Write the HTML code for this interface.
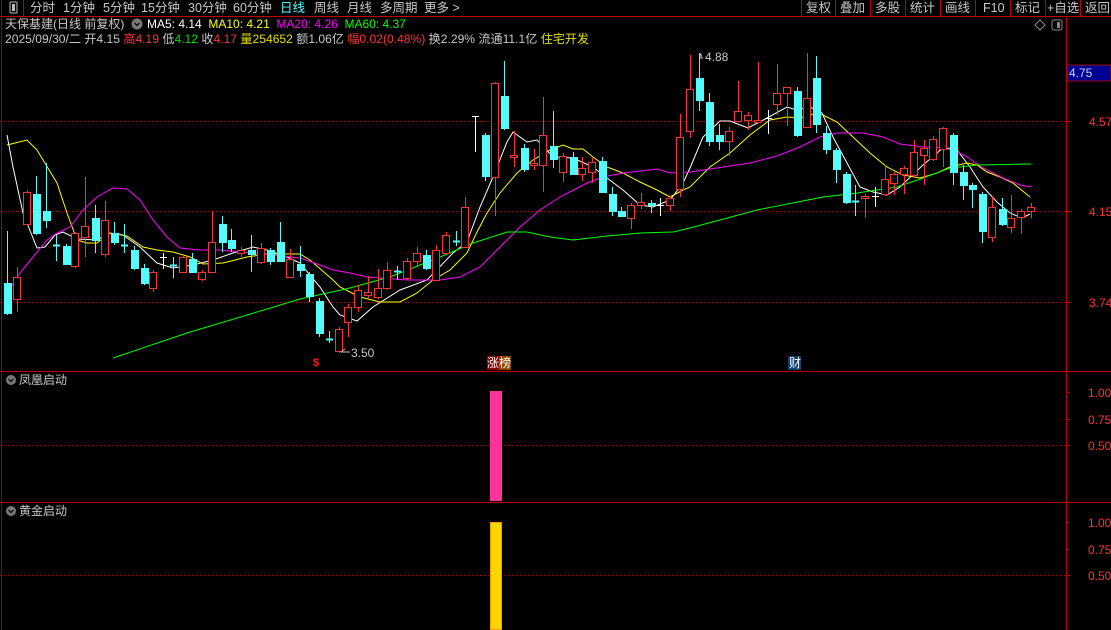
<!DOCTYPE html>
<html><head><meta charset="utf-8"><style>
html,body{margin:0;padding:0;background:#000;width:1111px;height:630px;overflow:hidden;font-family:"Liberation Sans","Noto Sans CJK SC",sans-serif;}
.t{position:absolute;white-space:nowrap;font-size:12px;line-height:14px;}
.b{position:absolute;white-space:nowrap;font-size:12.5px;line-height:14px;top:1px;color:#c8c8c8;}
</style></head><body>
<svg id="s" width="1111" height="630" style="position:absolute;left:0;top:0" xmlns="http://www.w3.org/2000/svg">
<rect width="1111" height="630" fill="#000"/>
<line x1="0" y1="16.5" x2="1111" y2="16.5" stroke="#c00000"/>
<line x1="1.5" y1="0" x2="1.5" y2="630" stroke="#a00000"/>
<line x1="23.5" y1="0" x2="23.5" y2="16" stroke="#c00000"/>
<rect x="10" y="2" width="7" height="11" rx="1" fill="none" stroke="#bbb"/>
<rect x="12" y="4" width="3" height="7" fill="#bbb"/>
<g stroke="#c00000">
<line x1="801.5" y1="0" x2="801.5" y2="16"/><line x1="835.5" y1="0" x2="835.5" y2="16"/><line x1="870.5" y1="0" x2="870.5" y2="16"/><line x1="905.5" y1="0" x2="905.5" y2="16"/><line x1="940.5" y1="0" x2="940.5" y2="16"/><line x1="975.5" y1="0" x2="975.5" y2="16"/><line x1="1010.5" y1="0" x2="1010.5" y2="16"/><line x1="1045.5" y1="0" x2="1045.5" y2="16"/><line x1="1080.5" y1="0" x2="1080.5" y2="16"/>
</g>
<line x1="1066.5" y1="16" x2="1066.5" y2="630" stroke="#c00000"/>
<line x1="0" y1="371.5" x2="1111" y2="371.5" stroke="#c00000"/>
<line x1="0" y1="502.5" x2="1111" y2="502.5" stroke="#c00000"/>
<g stroke="#c00000" stroke-dasharray="1,3">
<line x1="0" y1="121.5" x2="1066" y2="121.5"/><line x1="0" y1="211.5" x2="1066" y2="211.5"/><line x1="0" y1="302.5" x2="1066" y2="302.5"/>
<line x1="0" y1="445.5" x2="1066" y2="445.5"/><line x1="0" y1="575.5" x2="1066" y2="575.5"/>
</g>
<g stroke="#c00000">
<line x1="1066" y1="121.5" x2="1072" y2="121.5"/><line x1="1066" y1="211.5" x2="1072" y2="211.5"/><line x1="1066" y1="302.5" x2="1072" y2="302.5"/>
<line x1="1066" y1="392.5" x2="1070" y2="392.5"/><line x1="1066" y1="419.5" x2="1070" y2="419.5"/><line x1="1066" y1="445.5" x2="1070" y2="445.5"/>
<line x1="1066" y1="522.5" x2="1070" y2="522.5"/><line x1="1066" y1="549.5" x2="1070" y2="549.5"/><line x1="1066" y1="575.5" x2="1070" y2="575.5"/>
</g>
<rect x="1067" y="65" width="44" height="16" fill="#000090" stroke="#c00000" stroke-width="0.8"/>
<path d="M1040 20 l5 5 l-5 5 l-5 -5z" fill="none" stroke="#888"/>
<rect x="1052" y="20" width="10" height="10" rx="2" fill="none" stroke="#888"/><rect x="1057" y="22" width="3" height="6" fill="#888"/>
<g id="ma" fill="none" stroke-width="1"></g>
<g id="c"></g>
<rect x="490" y="391" width="12" height="110" fill="#ff3399"/>
<rect x="490" y="522" width="12" height="108" fill="#ffd700"/>
<rect x="490.5" y="522.5" width="11" height="107" fill="none" stroke="#ff9900"/>
<circle cx="11" cy="380" r="5" fill="#777"/><path d="M8.5 379 l2.5 2.5 l2.5 -2.5" stroke="#000" fill="none" stroke-width="1.2"/>
<circle cx="11" cy="511" r="5" fill="#777"/><path d="M8.5 510 l2.5 2.5 l2.5 -2.5" stroke="#000" fill="none" stroke-width="1.2"/>
<circle cx="137" cy="24" r="5.5" fill="#777"/><path d="M134.5 23 l2.5 2.5 l2.5 -2.5" stroke="#000" fill="none" stroke-width="1.2"/>
<path d="M345 349 l-4 3 M341 352 h9" stroke="#bbb" fill="none"/>
<path d="M702 56 l-3 -2 M699 54 h2 v4 M699 58 h4" stroke="#bbb" fill="none"/>
<rect x="487" y="356" width="12" height="14" fill="#8b0000"/><rect x="499" y="356" width="12" height="14" fill="#8b4500"/>
<rect x="788" y="356" width="13" height="14" fill="#104070"/>
</svg>
<div class="b" style="left:30px">分时</div>
<div class="b" style="left:63px">1分钟</div>
<div class="b" style="left:103px">5分钟</div>
<div class="b" style="left:141px">15分钟</div>
<div class="b" style="left:188px">30分钟</div>
<div class="b" style="left:233px">60分钟</div>
<div class="b" style="left:280px;color:#55ffff">日线</div>
<div class="b" style="left:314px">周线</div>
<div class="b" style="left:347px">月线</div>
<div class="b" style="left:380px">多周期</div>
<div class="b" style="left:424px">更多 &gt;</div>
<div class="b" style="left:806px">复权</div>
<div class="b" style="left:840px">叠加</div>
<div class="b" style="left:875px">多股</div>
<div class="b" style="left:910px">统计</div>
<div class="b" style="left:945px">画线</div>
<div class="b" style="left:983px">F10</div>
<div class="b" style="left:1015px">标记</div>
<div class="b" style="left:1047px">+自选</div>
<div class="b" style="left:1085px">返回</div>
<div class="t" style="left:5px;top:17px;color:#c8c8c8">天保基建(日线 前复权)</div>
<div class="t" style="left:147px;top:17px;"><span style="color:#fff">MA5: 4.14</span>&nbsp; <span style="color:#ffff00">MA10: 4.21</span>&nbsp; <span style="color:#ff00ff">MA20: 4.26</span>&nbsp; <span style="color:#00ff00">MA60: 4.37</span></div>
<div class="t" style="left:5px;top:32px;color:#c8c8c8;font-size:12.1px">2025/09/30/二 开4.15 <span style="color:#ff3232">高4.19</span> <span style="color:#c8c8c8">低</span><span style="color:#00e000">4.12</span> <span style="color:#c8c8c8">收</span><span style="color:#ff3232">4.17</span> <span style="color:#e0e000">量254652</span> 额1.06亿 <span style="color:#ff3232">幅0.02(0.48%)</span> 换2.29% 流通11.1亿 <span style="color:#e0e000">住宅开发</span></div>
<div class="t" style="left:1069px;top:66px;color:#d0d0ff">4.75</div>
<div class="t" style="left:1089px;top:115px;color:#ff3232">4.57</div>
<div class="t" style="left:1089px;top:205px;color:#ff3232">4.15</div>
<div class="t" style="left:1089px;top:296px;color:#ff3232">3.74</div>
<div class="t" style="left:1088px;top:386px;color:#ff3232">1.00</div>
<div class="t" style="left:1088px;top:413px;color:#ff3232">0.75</div>
<div class="t" style="left:1088px;top:439px;color:#ff3232">0.50</div>
<div class="t" style="left:1088px;top:516px;color:#ff3232">1.00</div>
<div class="t" style="left:1088px;top:543px;color:#ff3232">0.75</div>
<div class="t" style="left:1088px;top:569px;color:#ff3232">0.50</div>
<div class="t" style="left:351px;top:346px;color:#c8c8c8">3.50</div>
<div class="t" style="left:705px;top:50px;color:#c8c8c8">4.88</div>
<div class="t" style="left:313px;top:356px;color:#ff2020;font-weight:bold;font-size:11px">$</div>
<div class="t" style="left:487px;top:356px;color:#fff;font-size:12px">涨榜</div>
<div class="t" style="left:789px;top:356px;color:#fff;font-size:12px">财</div>
<div class="t" style="left:19px;top:373px;color:#c8c8c8">凤凰启动</div>
<div class="t" style="left:19px;top:504px;color:#c8c8c8">黄金启动</div>
<script>
var C=[
[0,'c',283,313,231,315],[1,'r',277,299,267,312],[2,'r',192,224,190,226],[3,'c',194,233,176,235],[4,'c',211,220,163,228],
[5,'c',245,246,235,261],[6,'c',246,264,244,265],[7,'r',233,266,232,268],[8,'r',226,237,177,257],[9,'c',218,240,205,253],
[10,'r',220,254,201,257],[11,'c',233,242,222,245],[12,'c',245,246,224,253],[13,'c',250,268,246,270],[14,'c',268,283,264,285],
[15,'r',272,288,270,292],[16,'w',257,257,253,269],[17,'c',265,266,257,278],[18,'r',257,272,254,273],[19,'c',259,272,253,273],
[20,'r',272,279,270,281],[21,'r',242,272,211,273],[22,'c',224,242,216,252],[23,'c',240,248,229,252],[24,'r',250,253,247,257],
[25,'c',250,254,235,272],[26,'r',248,262,243,264],[27,'c',250,261,248,265],[28,'c',242,261,222,262],[29,'r',259,277,249,278],
[30,'c',264,270,246,277],[31,'c',274,296,272,302],[32,'c',301,333,298,337],[33,'c',339,340,331,343],[34,'r',329,351,327,353],
[35,'r',307,322,304,337],[36,'r',290,307,285,312],[37,'r',292,295,276,298],[38,'r',288,297,269,299],[39,'r',270,288,262,290],
[40,'c',271,272,266,280],[41,'r',261,278,258,280],[42,'r',253,261,247,267],[43,'c',255,268,250,270],[44,'r',250,280,245,281],
[45,'r',235,253,232,254],[46,'c',241,242,231,246],[47,'r',207,247,197,248],[48,'w',116,116,116,152],[49,'c',135,176,133,181],
[50,'r',83,177,82,216],[51,'c',96,128,61,130],[52,'r',155,157,131,167],[53,'c',148,169,144,172],[54,'r',163,165,149,170],
[55,'r',135,165,97,192],[56,'c',146,159,111,168],[57,'r',156,172,153,182],[58,'c',157,174,152,175],[59,'r',168,174,157,181],
[60,'r',162,172,158,183],[61,'c',161,192,157,193],[62,'c',194,211,187,216],[63,'c',211,216,207,217],[64,'r',205,218,203,229],
[65,'r',202,205,193,209],[66,'c',203,205,200,213],[67,'w',205,205,198,216],[68,'r',198,205,196,211],[69,'r',137,189,114,197],
[70,'r',89,131,55,138],[71,'c',78,100,53,111],[72,'c',102,141,93,146],[73,'c',135,141,124,150],[74,'r',131,141,127,156],
[75,'r',111,121,81,121],[76,'r',115,120,112,130],[77,'r',120,122,62,122],[78,'w',118,118,110,134],[79,'r',93,104,64,115],
[80,'r',87,93,87,126],[81,'c',91,135,87,137],[82,'r',98,127,53,127],[83,'c',78,124,56,133],[84,'c',133,149,126,154],
[85,'c',150,169,148,183],[86,'c',174,202,172,204],[87,'c',201,202,185,216],[88,'r',196,198,194,218],[89,'w',196,196,187,207],
[90,'r',179,194,165,196],[91,'r',174,183,172,195],[92,'r',168,174,166,194],[93,'r',152,175,140,177],[94,'r',148,155,140,185],
[95,'r',139,159,136,161],[96,'r',128,149,127,167],[97,'c',135,172,133,185],[98,'c',172,185,165,200],[99,'c',185,189,183,208],
[100,'c',194,231,192,243],[101,'r',207,237,197,242],[102,'c',209,224,198,226],[103,'r',218,227,195,233],[104,'r',211,217,209,234],
[105,'r',207,211,203,218]];
var g=document.getElementById('c'),h='';
C.forEach(function(d){var x=Math.round(7+d[0]*9.752),col=d[1]=='r'?'#ff3232':d[1]=='c'?'#54fcfc':'#ffffff';
var t=Math.min(d[2],d[3]),b=Math.max(d[2],d[3]);
h+='<line x1="'+(x+.5)+'" y1="'+d[4]+'" x2="'+(x+.5)+'" y2="'+t+'" stroke="'+col+'"/>';
h+='<line x1="'+(x+.5)+'" y1="'+b+'" x2="'+(x+.5)+'" y2="'+d[5]+'" stroke="'+col+'"/>';
if(b-t<2){h+='<line x1="'+(x-3)+'" y1="'+(t+.5)+'" x2="'+(x+4)+'" y2="'+(t+.5)+'" stroke="'+col+'" stroke-width="'+(d[1]=='w'?1:2)+'"/>';}
else if(d[1]=='r'){h+='<rect x="'+(x-3.5)+'" y="'+(t+.5)+'" width="7" height="'+(b-t)+'" fill="#000" stroke="'+col+'"/>';}
else{h+='<rect x="'+(x-3)+'" y="'+t+'" width="8" height="'+(b-t+1)+'" fill="'+col+'"/>';}
});
g.innerHTML=h;
var M={
'#ffffff':[[7,135],[13,167],[23,213],[37,248],[45,247],[55,235],[63,232],[77,239],[97,240],[110,233],[123,235],[140,247],[157,263],[173,268],[193,265],[213,260],[233,253],[253,247],[267,250],[287,257],[300,263],[320,287],[333,307],[340,315],[357,321],[373,307],[400,290],[427,280],[453,253],[467,242],[480,207],[493,177],[507,142],[513,132],[527,142],[537,140],[553,157],[573,158],[593,167],[607,178],[623,190],[640,205],[653,207],[670,200],[683,183],[690,168],[703,137],[720,121],[730,121],[748,128],[767,118],[787,107],[797,110],[810,107],[822,113],[833,137],[847,163],[860,187],[873,192],[887,195],[900,187],[923,165],[943,148],[957,150],[970,167],[983,187],[997,202],[1010,213],[1022,218],[1030,214]],
'#ffff00':[[7,145],[27,140],[37,150],[57,183],[67,213],[77,240],[87,243],[97,243],[110,233],[127,236],[143,247],[157,250],[173,252],[190,257],[203,264],[223,263],[247,257],[267,254],[300,254],[310,260],[333,280],[340,287],[360,297],[380,302],[400,302],[417,293],[433,280],[450,270],[467,253],[477,232],[487,213],[500,193],[517,173],[533,160],[550,150],[563,145],[573,149],[583,149],[593,157],[607,167],[623,173],[640,182],[657,190],[670,197],[683,190],[690,187],[710,167],[730,153],[750,135],[770,120],[787,117],[800,118],[813,114],[823,115],[837,122],[853,137],[870,153],[887,167],[903,175],[920,178],[937,173],[950,167],[967,163],[977,165],[987,172],[1000,177],[1013,183],[1030,197]],
'#ff00ff':[[7,293],[20,273],[33,257],[47,240],[57,233],[70,227],[83,210],[97,197],[113,188],[127,189],[140,200],[153,220],[167,237],[180,248],[200,250],[220,250],[253,253],[300,258],[320,265],[333,270],[350,273],[367,277],[407,280],[440,280],[460,277],[480,267],[500,247],[520,227],[540,210],[560,197],[587,183],[603,177],[623,173],[657,169],[670,173],[690,172],[723,167],[750,163],[777,156],[800,147],[820,137],[837,133],[863,133],[883,137],[900,144],[923,147],[950,148],[967,157],[983,168],[1003,178],[1020,185],[1031,187]],
'#00ff00':[[113,358],[187,333],[267,309],[300,299],[350,288],[390,277],[440,257],[473,243],[507,232],[527,232],[550,237],[573,240],[607,236],[640,233],[673,232],[690,228],[757,210],[823,197],[857,193],[897,187],[923,178],[950,168],[977,165],[1031,164]]};
var mh='';for(var k in M){mh+='<polyline stroke="'+k+'" points="'+M[k].map(function(p){return p.join(',')}).join(' ')+'"/>';}
document.getElementById('ma').innerHTML=mh;
</script>
</body></html>
